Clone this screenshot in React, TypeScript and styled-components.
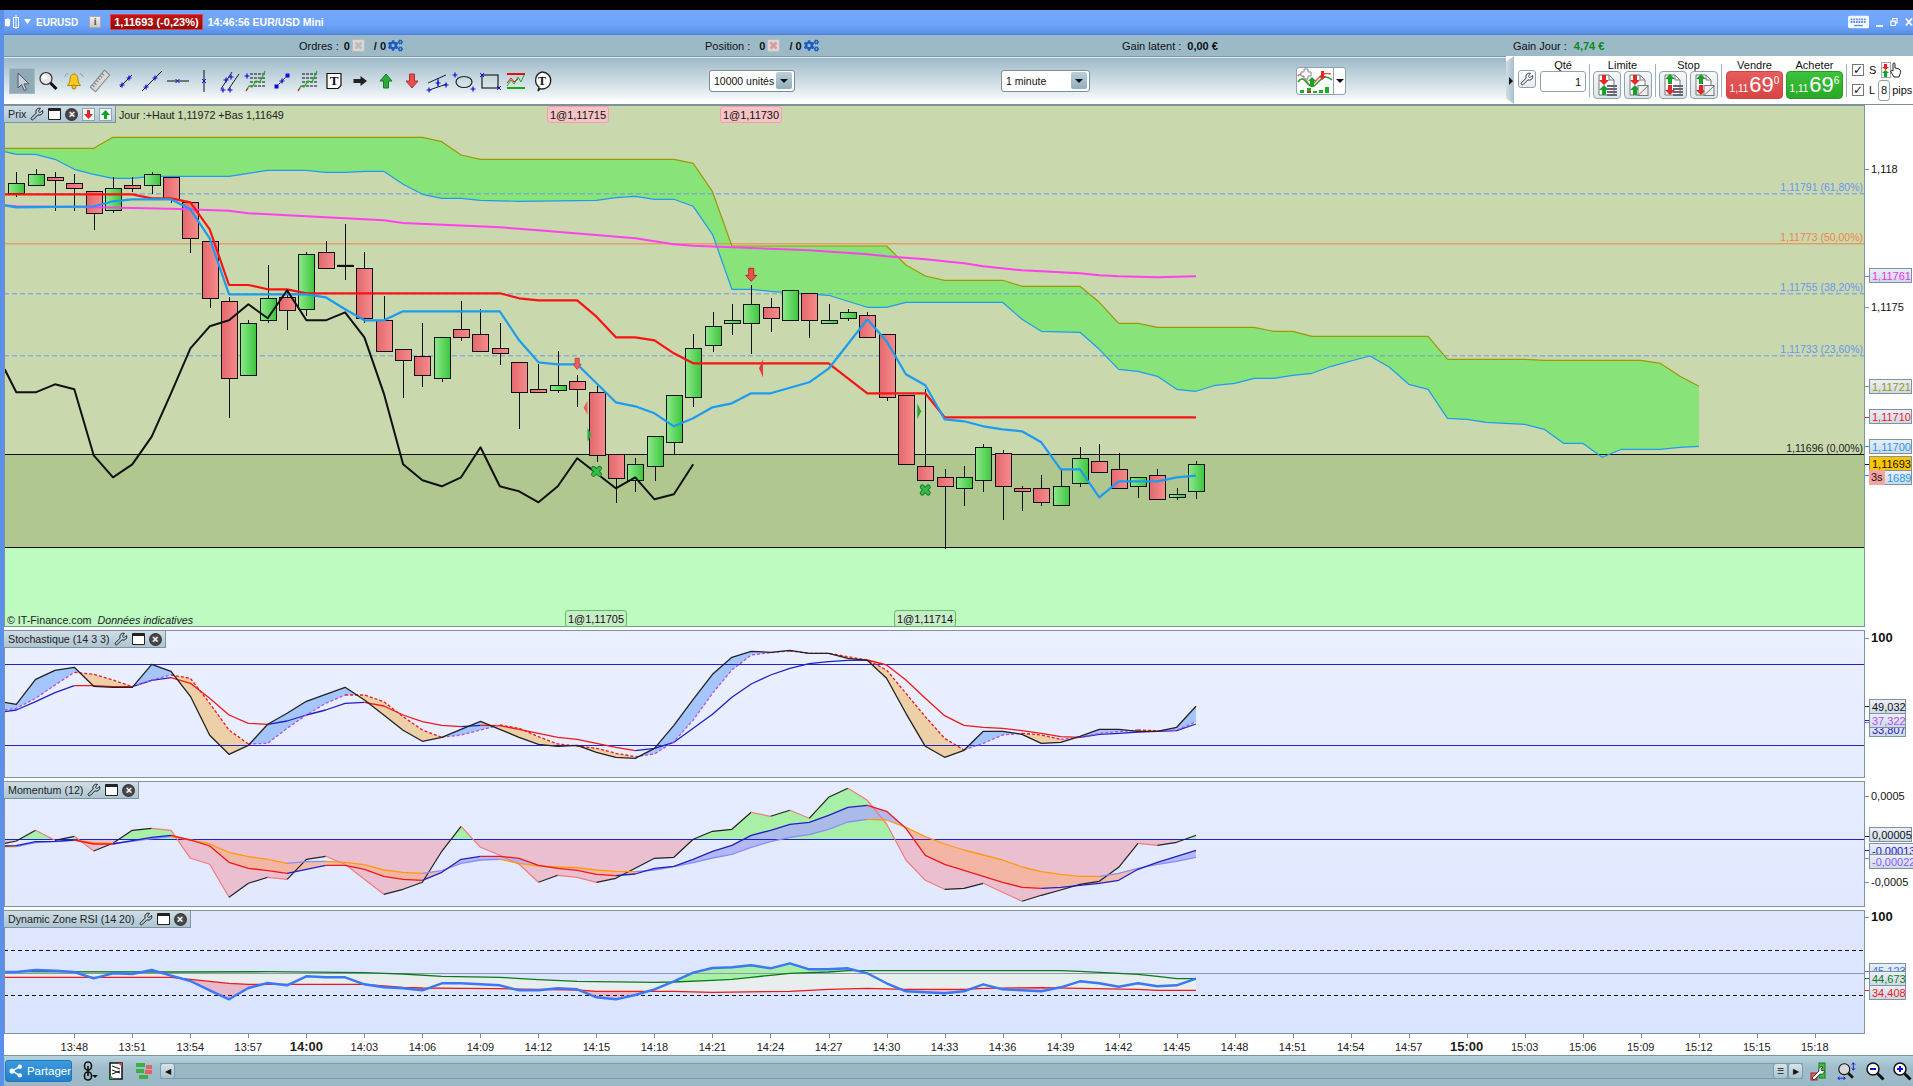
import React from "react";
import styled, { createGlobalStyle } from "styled-components";
import { Wrench } from "lucide-react";
import { FaCogs } from "react-icons/fa";

type Pt = [number, number];

// x of a minute index (0 = 13:45), in page pixels
const X = (i: number) => 16.3 + 19.34 * i;
// y values below are read from the zoomed crops: price crop starts at 130, indicators at 620
const PY = (z: number) => 130 + z / 3;
const IY = (z: number) => 620 + z / 3;

const seq = (first: number, rest: number[]): Pt[] => [[-0.6, first], ...rest.map((y, i) => [i, y] as Pt)];

const yAt = (s: Pt[], x: number) => {
  if (x <= s[0][0]) return s[0][1];
  for (let k = 1; k < s.length; k++) {
    if (x <= s[k][0]) {
      const [x0, y0] = s[k - 1];
      const [x1, y1] = s[k];
      return y0 + ((y1 - y0) * (x - x0)) / (x1 - x0);
    }
  }
  return s[s.length - 1][1];
};

const xsOf = (last: number) => [-0.6, ...Array.from({ length: last + 1 }, (_, i) => i)];
const pts = (s: Pt[], Y: (z: number) => number) => s.map(([i, z]) => `${X(i).toFixed(1)},${Y(z).toFixed(1)}`).join(" ");

// fills between two series, a different colour depending on which one is above
const ribbon = (a: Pt[], b: Pt[], last: number, up: string | null, down: string | null, Y: (z: number) => number) => {
  const out: { points: string; color: string }[] = [];
  const xs = xsOf(last);
  let top: string[] = [];
  let bot: string[] = [];
  let cur: string | null = null;
  const flush = () => {
    if (cur && top.length > 1) out.push({ points: [...top, ...bot.reverse()].join(" "), color: cur });
    top = [];
    bot = [];
  };
  const add = (x: number, ya: number, yb: number) => {
    top.push(`${X(x).toFixed(1)},${Y(ya).toFixed(1)}`);
    bot.push(`${X(x).toFixed(1)},${Y(yb).toFixed(1)}`);
  };
  for (let k = 0; k < xs.length - 1; k++) {
    const x0 = xs[k];
    const x1 = xs[k + 1];
    const a0 = yAt(a, x0);
    const a1 = yAt(a, x1);
    const b0 = yAt(b, x0);
    const b1 = yAt(b, x1);
    const d0 = a0 - b0;
    const d1 = a1 - b1;
    const c0 = d0 < 0 || (d0 === 0 && d1 < 0) ? up : down;
    if (c0 !== cur) {
      flush();
      cur = c0;
    }
    if (top.length === 0) add(x0, a0, b0);
    if (d0 * d1 < 0) {
      const t = d0 / (d0 - d1);
      const xc = x0 + (x1 - x0) * t;
      const yc = a0 + (a1 - a0) * t;
      add(xc, yc, yc);
      flush();
      cur = d1 < 0 ? up : down;
      add(xc, yc, yc);
    }
    add(x1, a1, b1);
  }
  flush();
  return out;
};

// a line coloured by its own direction: rising or falling
const runs = (s: Pt[], last: number, rising: string, falling: string, Y: (z: number) => number) => {
  const out: { points: string; color: string }[] = [];
  const xs = xsOf(last);
  let cur = "";
  let line: string[] = [];
  xs.forEach((x, k) => {
    if (k === xs.length - 1) return;
    const c = yAt(s, xs[k + 1]) < yAt(s, x) ? rising : falling;
    if (c !== cur) {
      if (line.length > 1) out.push({ points: line.join(" "), color: cur });
      cur = c;
      line = [`${X(x).toFixed(1)},${Y(yAt(s, x)).toFixed(1)}`];
    }
    line.push(`${X(xs[k + 1]).toFixed(1)},${Y(yAt(s, xs[k + 1])).toFixed(1)}`);
  });
  if (line.length > 1) out.push({ points: line.join(" "), color: cur });
  return out;
};

// [kind, bodyTop, bodyBottom, wickTop, wickBottom], minute index = position
const candles: [string, number, number, number, number][] = [
  ["g", 160, 190, 126, 200], ["g", 133, 166, 118, 166], ["r", 142, 151, 126, 242], ["r", 160, 176, 133, 242],
  ["r", 184, 250, 184, 300], ["g", 175, 241, 142, 250], ["r", 166, 175, 142, 185], ["g", 133, 166, 126, 193],
  ["r", 142, 207, 142, 218], ["r", 217, 325, 217, 368], ["r", 334, 505, 334, 533], ["r", 514, 745, 500, 863],
  ["g", 580, 736, 570, 736], ["g", 505, 571, 405, 580], ["r", 500, 538, 480, 600], ["g", 373, 538, 365, 558],
  ["r", 367, 415, 334, 415], ["r", 405, 407, 282, 450], ["r", 415, 565, 366, 580], ["r", 571, 664, 498, 664],
  ["r", 656, 688, 656, 803], ["r", 679, 736, 579, 770], ["g", 622, 745, 622, 755], ["r", 598, 622, 514, 632],
  ["r", 613, 664, 538, 664], ["r", 655, 670, 580, 705], ["r", 697, 787, 697, 896], ["r", 778, 787, 702, 787],
  ["g", 764, 778, 664, 788], ["r", 754, 778, 736, 830], ["r", 787, 975, 768, 997], ["r", 971, 1042, 971, 1118],
  ["g", 1003, 1050, 985, 1085], ["g", 919, 1009, 919, 1052], ["g", 796, 937, 796, 972], ["g", 655, 802, 612, 830],
  ["g", 589, 646, 546, 665], ["g", 571, 580, 522, 614], ["g", 523, 580, 466, 672], ["r", 532, 565, 504, 606],
  ["g", 481, 571, 481, 571], ["r", 490, 571, 490, 623], ["g", 571, 580, 522, 580], ["g", 547, 565, 538, 572],
  ["r", 556, 622, 546, 622], ["r", 613, 802, 613, 812], ["r", 796, 1003, 796, 1003], ["r", 1009, 1051, 778, 1051],
  ["r", 1042, 1069, 1018, 1258], ["g", 1042, 1075, 1008, 1128], ["g", 952, 1051, 942, 1085], ["r", 970, 1069, 960, 1170],
  ["r", 1075, 1084, 1068, 1143], ["r", 1075, 1117, 1035, 1127], ["g", 1069, 1126, 1018, 1126], ["g", 985, 1060, 952, 1070],
  ["r", 994, 1027, 942, 1027], ["r", 1018, 1075, 968, 1075], ["g", 1042, 1069, 1042, 1103], ["r", 1036, 1108, 1018, 1108],
  ["g", 1093, 1102, 1075, 1110], ["g", 1003, 1084, 994, 1108],
];

const cloudTop: Pt[] = [[-0.6, 55], [4, 55], [5, 22], [21, 22], [22, 35], [23, 75], [24, 88], [34, 88], [35, 100], [36, 185], [37, 348], [45, 348], [46, 405], [47, 438], [48, 451], [51, 451], [52, 469], [55, 469], [56, 517], [57, 580], [58, 580], [59, 592], [64, 592], [65, 604], [66, 604], [67, 619], [73, 619], [74, 688], [78, 688], [79, 691], [84, 691], [85, 700], [86, 738], [87, 769]];
const cloudBot: Pt[] = [[-0.6, 65], [0, 73], [1, 73], [2, 88], [3, 118], [4, 133], [5, 145], [6, 145], [7, 139], [11, 139], [12, 130], [13, 121], [15, 121], [16, 127], [17, 127], [18, 124], [19, 124], [20, 163], [21, 193], [22, 205], [23, 205], [24, 211], [26, 214], [30, 211], [31, 203], [32, 199], [33, 208], [34, 208], [35, 229], [36, 313], [37, 478], [38, 478], [39, 484], [42, 496], [43, 514], [44, 532], [45, 532], [46, 517], [51, 517], [52, 568], [53, 604], [55, 607], [56, 658], [57, 718], [58, 724], [59, 739], [60, 778], [61, 784], [62, 766], [63, 760], [64, 745], [65, 745], [66, 736], [67, 730], [68, 709], [69, 693], [70, 678], [71, 712], [72, 763], [73, 778], [74, 865], [75, 868], [76, 877], [78, 883], [79, 898], [80, 940], [81, 940], [82, 982], [83, 958], [85, 958], [86, 952], [87, 949]];
const kijun: Pt[] = [[-0.6, 193], [6, 193], [7, 205], [8, 205], [9, 217], [10, 298], [11, 465], [12, 465], [13, 478], [14, 478], [15, 490], [25, 490], [26, 505], [27, 511], [29, 511], [30, 560], [31, 622], [32, 622], [33, 631], [34, 670], [35, 700], [42, 700], [44, 790], [47, 790], [48, 862], [61, 862]];
const tenkan: Pt[] = [[-0.6, 226], [0, 232], [4, 229], [5, 214], [6, 208], [8, 208], [9, 238], [10, 325], [11, 493], [15, 493], [16, 502], [17, 538], [18, 571], [19, 571], [20, 544], [25, 544], [26, 631], [27, 697], [28, 703], [29, 703], [30, 760], [31, 817], [32, 829], [33, 850], [34, 889], [35, 865], [36, 832], [37, 820], [38, 790], [39, 790], [41, 757], [42, 716], [44, 568], [45, 634], [46, 733], [47, 766], [48, 868], [49, 874], [50, 889], [51, 898], [52, 904], [53, 937], [54, 1018], [55, 1018], [56, 1102], [57, 1054], [59, 1054], [60, 1042], [61, 1037]];
const sma: Pt[] = [[-0.6, 226], [0, 229], [4, 232], [8, 236], [11, 242], [12, 250], [16, 262], [19, 271], [20, 279], [25, 292], [27, 301], [32, 325], [34, 343], [35, 347], [37, 352], [41, 361], [44, 373], [45, 379], [47, 388], [49, 400], [50, 409], [52, 421], [55, 430], [56, 436], [57, 439], [59, 442], [61, 439]];
const lagging: Pt[] = seq(718, [787, 787, 763, 778, 976, 1042, 1003, 920, 790, 655, 589, 571, 523, 565, 481, 571, 571, 547, 622, 790, 1003, 1051, 1069, 1042, 952, 1069, 1084, 1117, 1069, 985, 1030, 1075, 1042, 1108, 1093, 1003]);

const stochK = seq(247, [253, 178, 151, 142, 199, 202, 202, 133, 154, 229, 346, 403, 376, 313, 280, 244, 223, 202, 240, 285, 331, 364, 352, 328, 304, 328, 352, 373, 379, 376, 397, 412, 415, 385, 316, 238, 163, 112, 94, 97, 91, 100, 100, 115, 121, 175, 280, 379, 412, 391, 334, 334, 343, 370, 367, 349, 328, 328, 334, 334, 322, 259]);
const stochD = seq(270, [265, 235, 195, 157, 163, 180, 200, 180, 165, 175, 250, 330, 372, 370, 325, 285, 250, 225, 225, 245, 290, 330, 352, 345, 330, 315, 325, 350, 372, 378, 385, 400, 410, 402, 365, 300, 220, 150, 105, 98, 93, 100, 100, 110, 120, 150, 220, 290, 355, 390, 370, 345, 340, 345, 358, 352, 340, 335, 330, 332, 330, 305]);
const stochS = seq(275, [270, 245, 218, 197, 197, 200, 200, 181, 173, 190, 235, 285, 310, 313, 303, 285, 270, 250, 247, 258, 285, 305, 316, 320, 316, 317, 328, 340, 352, 358, 370, 382, 392, 385, 367, 325, 283, 232, 192, 165, 145, 131, 125, 121, 120, 135, 180, 235, 287, 316, 322, 325, 332, 340, 350, 352, 343, 340, 336, 334, 332, 312]);

const zero: Pt[] = [[-0.6, 658], [61, 658]];
const momM = seq(670, [663, 631, 661, 649, 693, 670, 631, 625, 631, 715, 733, 832, 790, 772, 778, 718, 709, 733, 778, 823, 808, 787, 694, 619, 682, 706, 733, 787, 766, 772, 787, 775, 745, 715, 712, 658, 634, 628, 577, 589, 571, 595, 532, 505, 541, 612, 720, 781, 808, 805, 790, 817, 844, 826, 810, 793, 784, 742, 670, 676, 667, 646]);
const momA = seq(678, [677, 665, 664, 660, 672, 672, 662, 652, 646, 660, 678, 727, 745, 752, 760, 748, 736, 736, 748, 769, 778, 781, 757, 718, 709, 709, 715, 736, 745, 751, 763, 767, 762, 745, 739, 718, 694, 676, 646, 631, 613, 607, 586, 562, 556, 574, 625, 706, 733, 751, 769, 787, 802, 805, 802, 796, 790, 781, 748, 727, 709, 691]);
const momB = seq(680, [680, 668, 665, 661, 668, 670, 664, 656, 650, 660, 672, 697, 710, 718, 730, 725, 724, 727, 734, 750, 757, 760, 752, 730, 720, 718, 730, 738, 741, 743, 750, 754, 755, 750, 740, 728, 714, 703, 682, 665, 652, 644, 628, 606, 598, 600, 622, 650, 672, 690, 705, 720, 741, 755, 763, 769, 769, 760, 745, 733, 724, 712]);

const rsiR = seq(1056, [1056, 1050, 1052, 1056, 1075, 1060, 1062, 1050, 1067, 1083, 1111, 1138, 1104, 1089, 1096, 1069, 1072, 1072, 1093, 1102, 1105, 1111, 1090, 1090, 1093, 1096, 1111, 1111, 1105, 1108, 1132, 1138, 1125, 1108, 1084, 1058, 1044, 1042, 1036, 1045, 1030, 1048, 1048, 1045, 1060, 1090, 1114, 1117, 1120, 1114, 1093, 1108, 1111, 1114, 1102, 1084, 1090, 1100, 1090, 1099, 1096, 1076]);
const rsiU: Pt[] = [[-0.6, 1055], [8, 1056], [13, 1055], [18, 1058], [19, 1060], [20, 1062], [22, 1069], [25, 1072], [27, 1079], [29, 1084], [33, 1087], [34, 1086], [36, 1081], [37, 1078], [38, 1072], [39, 1066], [40, 1060], [41, 1058], [42, 1056], [43, 1052], [54, 1052], [55, 1054], [57, 1060], [58, 1063], [59, 1069], [60, 1076], [61, 1076]];
const rsiL: Pt[] = [[-0.6, 1072], [8, 1072], [9, 1078], [10, 1084], [11, 1090], [12, 1093], [18, 1093], [19, 1098], [20, 1102], [21, 1104], [23, 1105], [25, 1106], [27, 1108], [29, 1110], [30, 1114], [34, 1114], [36, 1117], [40, 1114], [42, 1108], [44, 1105], [46, 1108], [49, 1108], [50, 1105], [53, 1103], [55, 1105], [58, 1108], [59, 1111], [61, 1111]];

const times: { label: string; bold: boolean }[] = Array.from({ length: 31 }, (_, k) => {
  const m = 13 * 60 + 48 + k * 3;
  const mm = String(m % 60).padStart(2, "0");
  return { label: `${Math.floor(m / 60)}:${mm}`, bold: m % 60 === 0 };
});

const GlobalStyle = createGlobalStyle`
  html, body {
    margin: 0;
    padding: 0;
    background: #000;
    overflow: hidden;
  }
  * {
    box-sizing: border-box;
  }
  body {
    font-family: "Liberation Sans", Arial, sans-serif;
    font-size: 11px;
    color: #111;
  }
`;

const Root = styled.div`
  width: 1913px;
  height: 1086px;
  padding-top: 10px;
  background: #000;
  display: flex;
  flex-direction: column;
`;

const Frame = styled.div`
  flex: 1;
  min-height: 0;
  display: flex;
  flex-direction: column;
  background: #fff;
  border-left: 4px solid #5a90ea;
`;

const TitleBar = styled.div`
  height: 25px;
  display: flex;
  align-items: center;
  background: linear-gradient(#73a9fc, #6da3f8 60%, #5a8fe8);
  border-bottom: 1px solid #4d7fd6;
  color: #fff;
  font-weight: bold;
  font-size: 10.5px;
`;

const Symbol = styled.span`
  margin: 0 11px 0 3px;
  font-size: 10px;
`;

const InfoBox = styled.span`
  width: 12px;
  height: 12px;
  background: linear-gradient(#f0f0f0, #c8c8c8);
  border: 1px solid #aaa;
  color: #555;
  font: bold 10px/10px "Liberation Serif", serif;
  text-align: center;
`;

const PriceBox = styled.span`
  height: 16px;
  line-height: 15px;
  margin: 0 5px 0 9px;
  padding: 0 3px;
  font-size: 11px;
  background: linear-gradient(#c71414, #8f0b0b);
  border: 1px solid #e04040;
`;

const WindowControls = styled.div`
  margin-left: auto;
  display: flex;
  align-items: center;
  gap: 7px;
  height: 100%;
  width: 65px;
  overflow: hidden;
`;

const StatsBar = styled.div`
  height: 22px;
  flex: none;
  display: flex;
  align-items: center;
  padding-left: 295px;
  background: #9cb9c7;
  border-bottom: 1px solid #7d99a7;
  box-shadow: 0 1px 0 #e4eef2;
  position: relative;
`;

const StatGroup = styled.div<{ $width: number }>`
  width: ${(p) => p.$width}px;
  flex: none;
  display: flex;
  align-items: center;
  gap: 2px;
`;

const StatValue = styled.b<{ $color?: string; $gap?: number }>`
  color: ${(p) => p.$color || "#111"};
  margin-left: ${(p) => p.$gap || 0}px;
`;

const ToolBar = styled.div`
  height: 48px;
  flex: none;
  display: flex;
  align-items: center;
  padding-left: 5px;
  background: linear-gradient(#9cb9c7, #dfe9ee 70%, #fff 96%);
  border-bottom: 1px solid #7d8f98;
`;

const ToolButton = styled.div<{ $active?: boolean }>`
  width: 26px;
  height: 26px;
  flex: none;
  display: flex;
  align-items: center;
  justify-content: center;
  background: ${(p) => (p.$active ? "#8fa9b6" : "transparent")};
  box-shadow: ${(p) => (p.$active ? "inset 0 0 0 1px #a7bcc6" : "none")};
`;

const SelectBox = styled.div<{ $width: number; $left: number }>`
  width: ${(p) => p.$width}px;
  margin-left: ${(p) => p.$left}px;
  height: 22px;
  flex: none;
  display: flex;
  align-items: center;
  justify-content: space-between;
  padding: 0 2px 0 4px;
  background: #fff;
  border: 1px solid #7d8f98;
  border-radius: 3px;
  font-size: 11px;
  white-space: nowrap;
  span:first-child {
    font-size: 10.5px;
  }
`;

const SelectArrow = styled.span`
  width: 16px;
  height: 17px;
  flex: none;
  background: linear-gradient(#b9cfd9, #91aebd);
  border-radius: 2px;
  display: flex;
  align-items: center;
  justify-content: center;
  &::after {
    content: "";
    border-left: 4px solid transparent;
    border-right: 4px solid transparent;
    border-top: 4px solid #111;
  }
`;

const ChartTypeButton = styled.div`
  width: 50px;
  height: 28px;
  margin-left: 206px;
  flex: none;
  display: flex;
  background: #fff;
  border: 1px solid #8fa3ae;
  border-radius: 3px;
`;

const ChartTypeArrow = styled.div`
  flex: 1;
  border-left: 1px solid #8fa3ae;
  display: flex;
  align-items: center;
  justify-content: center;
  &::after {
    content: "";
    border-left: 4px solid transparent;
    border-right: 4px solid transparent;
    border-top: 4px solid #111;
  }
`;

const TradePanel = styled.div`
  margin-left: auto;
  width: 407px;
  height: 48px;
  margin-top: -1px;
  align-self: flex-start;
  flex: none;
  background: #fff;
  display: flex;
  align-items: flex-start;
  position: relative;
  padding-left: 12px;
  &::before {
    content: "";
    position: absolute;
    left: 0;
    top: 0;
    width: 8px;
    height: 48px;
    background: linear-gradient(90deg, #cfdde5, #a9c0cc);
    clip-path: polygon(100% 0, 0 12%, 0 88%, 100% 100%);
  }
  &::after {
    content: "";
    position: absolute;
    left: 3px;
    top: 21px;
    border-top: 4px solid transparent;
    border-bottom: 4px solid transparent;
    border-left: 4px solid #111;
  }
`;

const SmallButton = styled.div`
  width: 18px;
  height: 18px;
  margin-top: 14px;
  flex: none;
  border: 1px solid #8fa3ae;
  border-radius: 3px;
  background: linear-gradient(#fff, #e4ebef);
  display: flex;
  align-items: center;
  justify-content: center;
`;

const TradeGroup = styled.div<{ $left: number; $width: number }>`
  margin-left: ${(p) => p.$left}px;
  width: ${(p) => p.$width}px;
  flex: none;
  display: flex;
  flex-direction: column;
  align-items: center;
`;

const TradeLabel = styled.div`
  height: 15px;
  line-height: 18px;
  font-size: 11px;
  color: #111;
`;

const TradeRow = styled.div`
  display: flex;
  gap: 3px;
`;

const QtyField = styled.div`
  width: 46px;
  height: 21px;
  border: 1px solid #8fa3ae;
  border-radius: 3px;
  text-align: right;
  padding: 4px 4px 0 0;
  font-size: 11px;
`;

const OrderButton = styled.div`
  width: 28px;
  height: 28px;
  border: 1px solid #8fa3ae;
  border-radius: 4px;
  background: linear-gradient(#f4f7f8, #dde6ea);
  display: flex;
  align-items: center;
  justify-content: center;
`;

const Sep = styled.div`
  width: 1px;
  height: 33px;
  margin: 8px 0 0 3px;
  background: #9fb2bc;
  flex: none;
`;

const PriceButton = styled.div<{ $color: "red" | "green" }>`
  width: 57px;
  height: 28px;
  border-radius: 4px;
  color: #fff;
  display: flex;
  align-items: center;
  justify-content: center;
  background: ${(p) => (p.$color === "red" ? "linear-gradient(#e75c5c, #d84444)" : "linear-gradient(#3cc23c, #28a828)")};
  border: 1px solid ${(p) => (p.$color === "red" ? "#c44" : "#2a9a2a")};
`;

const PriceSmall = styled.span`
  font-size: 10px;
  align-self: flex-end;
  margin-bottom: 4px;
`;

const PriceBig = styled.span`
  font-size: 22px;
  line-height: 26px;
  margin-left: 1px;
`;

const PriceSup = styled.span`
  font-size: 10px;
  align-self: flex-start;
  margin-top: 3px;
`;

const ChecksColumn = styled.div`
  margin-left: 5px;
  padding-top: 6px;
  display: flex;
  flex-direction: column;
  gap: 4px;
`;

const CheckRow = styled.div`
  display: flex;
  align-items: center;
  height: 16px;
  gap: 5px;
`;

const Check = styled.span`
  width: 12px;
  height: 12px;
  border: 1px solid #777;
  background: #fff;
  font-size: 12px;
  line-height: 10px;
  font-weight: bold;
  font-family: "DejaVu Sans", sans-serif;
  text-align: center;
  flex: none;
`;

const PipField = styled.span`
  width: 12px;
  height: 21px;
  border: 1px solid #8fa3ae;
  border-radius: 3px;
  line-height: 19px;
  text-align: center;
  margin: 0 -3px -1px -2px;
  flex: none;
`;

const PaneRow = styled.div<{ $height: number; $gap?: number }>`
  height: ${(p) => p.$height}px;
  margin-bottom: ${(p) => p.$gap || 0}px;
  flex: none;
  display: flex;
`;

const Pane = styled.div<{ $bg: string }>`
  width: 1861px;
  height: 100%;
  flex: none;
  position: relative;
  overflow: hidden;
  background: ${(p) => p.$bg};
  outline: 1px solid #7d93a0;
  outline-offset: -1px;
  & > svg {
    display: block;
  }
`;

const Legend = styled.div`
  position: absolute;
  left: 0;
  top: 1px;
  height: 17px;
  padding: 0 3px 0 4px;
  display: flex;
  align-items: center;
  gap: 4px;
  background: linear-gradient(#cfdde5, #aec5d1);
  border-right: 1px solid #7d93a0;
  border-bottom: 1px solid #7d93a0;
  font-size: 10.7px;
  color: #222;
`;

const LegendText = styled.span`
  position: absolute;
  left: 115px;
  top: 4px;
  font-size: 10.7px;
  color: #222;
`;

const WinBox = styled.span`
  width: 13px;
  height: 12px;
  background: #fff;
  border: 1px solid #222;
  border-top-width: 3px;
  border-radius: 1px;
`;

const CloseDot = styled.span`
  width: 13px;
  height: 13px;
  border-radius: 50%;
  background: radial-gradient(#666, #222);
  color: #fff;
  font-size: 11px;
  font-weight: bold;
  line-height: 12px;
  text-align: center;
`;

const Footnote = styled.span`
  position: absolute;
  left: 3px;
  bottom: 1px;
  font-size: 10.7px;
  color: #222;
  em {
    margin-left: 3px;
  }
`;

const FillTag = styled.div<{ $left: number; $tone: "sell" | "buy" }>`
  position: absolute;
  left: ${(p) => p.$left}px;
  ${(p) => (p.$tone === "sell" ? "top: 1px;" : "bottom: 0;")}
  width: 62px;
  height: 17px;
  line-height: 16px;
  text-align: center;
  font-size: 11px;
  color: #111;
  border-radius: 3px;
  background: ${(p) => (p.$tone === "sell" ? "#f6c4c4" : "#c8ecc8")};
  border: 1px solid ${(p) => (p.$tone === "sell" ? "#f0a0a8" : "#54c854")};
`;

const Axis = styled.div`
  flex: 1;
  position: relative;
  overflow: hidden;
  background: #fff;
`;

const AxisTick = styled.i<{ $top: number; $color?: string }>`
  position: absolute;
  left: 0;
  top: ${(p) => p.$top}px;
  width: 4px;
  height: 1px;
  background: ${(p) => p.$color || "#7d93a0"};
`;

const AxisLabel = styled.span<{ $top: number; $bold?: boolean }>`
  position: absolute;
  left: 6px;
  top: ${(p) => p.$top - 7}px;
  font-size: ${(p) => (p.$bold ? 13 : 11)}px;
  font-weight: ${(p) => (p.$bold ? "bold" : "normal")};
  line-height: 14px;
  color: #111;
`;

const AxisTag = styled.span<{ $top: number; $width: number; $color: string; $bg?: string }>`
  position: absolute;
  left: 4px;
  top: ${(p) => p.$top}px;
  width: ${(p) => p.$width}px;
  height: 15px;
  padding-left: 2px;
  font-size: 11px;
  line-height: 14px;
  white-space: nowrap;
  color: ${(p) => p.$color};
  background: ${(p) => p.$bg || "linear-gradient(#eaeff9, #cfd9e6)"};
  border: 1px solid #7d93a0;
`;

const CountdownPart = styled.span`
  position: absolute;
  left: 4px;
  top: 365px;
  width: 16px;
  height: 15px;
  padding-left: 2px;
  font-size: 11px;
  line-height: 14px;
  background: #f4a4a0;
  color: #111;
`;

const CountValue = styled.span`
  margin-left: 15px;
`;

const TimeAxis = styled.div`
  height: 22px;
  flex: none;
  display: flex;
  padding-left: 41.3px;
  background: #fff;
  border-bottom: 1px solid #7d93a0;
`;

const TimeTick = styled.div<{ $bold: boolean }>`
  width: 58.03px;
  flex: none;
  text-align: center;
  position: relative;
  padding-top: 6px;
  font-size: ${(p) => (p.$bold ? 13 : 11)}px;
  line-height: 14px;
  font-weight: ${(p) => (p.$bold ? "bold" : "normal")};
  color: #222;
  &::before {
    content: "";
    position: absolute;
    left: 50%;
    top: 0;
    width: 1px;
    height: 4px;
    background: #7d93a0;
  }
`;

const BottomBar = styled.div`
  flex: 1;
  display: flex;
  align-items: center;
  padding-left: 1px;
  background: linear-gradient(#b4d1dd, #9fbdcb 40%, #99b7c5);
`;

const ShareButton = styled.div`
  width: 67px;
  height: 22px;
  flex: none;
  display: flex;
  align-items: center;
  gap: 4px;
  padding-left: 3px;
  border-radius: 3px;
  background: linear-gradient(#3c9ae0, #2480c8);
  border: 1px solid #1f78c0;
  color: #fff;
  font-size: 11.5px;
`;

const BarIcon = styled.div<{ $width: number; $left: number }>`
  width: ${(p) => p.$width}px;
  margin-left: ${(p) => p.$left}px;
  height: 22px;
  flex: none;
  display: flex;
  align-items: center;
  justify-content: center;
`;

const ScrollTrack = styled.div`
  flex: none;
  width: 1643px;
  height: 16px;
  margin-left: 8px;
  display: flex;
  justify-content: space-between;
  align-items: center;
  border-top: 1px solid #7f9aa8;
  border-bottom: 1px solid #7f9aa8;
  background: #99b7c5;
`;

const ScrollEnd = styled.div`
  display: flex;
`;

const ScrollButton = styled.div`
  width: 15px;
  height: 16px;
  border: 1px solid #7f9aa8;
  border-radius: 3px;
  background: linear-gradient(#d6e4ea, #aac3cf);
  display: flex;
  align-items: center;
  justify-content: center;
  font-size: 8px;
  color: #111;
`;

/* ---- drawings ---- */

const CrossMark: React.FC<{ x: number; y: number }> = ({ x, y }) => (
  <path d={`M${x - 2.5} ${y}h5M${x} ${y - 2.5}v5`} stroke="#0a0ae6" strokeWidth="1.2" fill="none" />
);

const FibLines: React.FC = () => (
  <>
    <path d="M6 5h16M6 9h16M6 13h16M6 17h16" stroke="#111" strokeWidth="1" strokeDasharray="3 1" fill="none" />
    <path d="M2 22l3-5 3 1 4-6 4 1 5-11" stroke="#22aa22" strokeWidth="1.2" fill="none" />
    <path d="M2 22l2-3" stroke="#e02020" strokeWidth="1.2" fill="none" />
  </>
);

const toolIcons: React.ReactNode[] = [
  <path key="a" d="M8 4v15l3.5-3.5 2.7 6 2.3-1-2.6-5.6h5z" fill="#c8d2d8" stroke="#4c5a62" strokeWidth="1" />,
  <g key="b">
    <circle cx="10" cy="9.5" r="6" fill="#e6e6e6" stroke="#333" strokeWidth="1.2" />
    <circle cx="8.5" cy="8" r="2.5" fill="#fff" />
    <path d="M14.5 14l6 6" stroke="#111" strokeWidth="3" />
  </g>,
  <g key="c">
    <path d="M12 5c-3 0-4 3-4 6 0 3-2 4-2.5 5.5h13c-.5-1.5-2.500-2.500-2.500-5.500 0-3-1-6-4-6z" fill="#ffc81e" stroke="#a88410" />
    <circle cx="12" cy="18" r="2" fill="#ffc81e" stroke="#a88410" />
    <path d="M4.500 5l-2 3M19.500 5l2 3M6 4L4.500 6M18 4l1.500 2" stroke="#999" fill="none" />
  </g>,
  <g key="d" transform="rotate(-50 12 12)">
    <rect x="1" y="8.500" width="22" height="7" fill="#d8d8d8" stroke="#888" />
    <path d="M4 8.500v3M7 8.500v3M10 8.500v3M13 8.500v3M16 8.500v3M19 8.500v3" stroke="#777" />
  </g>,
  <g key="e">
    <path d="M6 18L18 6" stroke="#111" />
    <CrossMark x={8} y={16} />
    <CrossMark x={15} y={9} />
  </g>,
  <g key="f">
    <path d="M2 22L22 2" stroke="#111" />
    <CrossMark x={6} y={18} />
    <CrossMark x={15} y={9} />
  </g>,
  <g key="g">
    <path d="M1 12h22" stroke="#111" />
    <path d="M9.500 10l4 4M13.500 10l-4 4" stroke="#0a0ae6" />
  </g>,
  <g key="h">
    <path d="M12 1v22" stroke="#111" />
    <path d="M10 10l4 4M14 10l-4 4" stroke="#0a0ae6" />
  </g>,
  <g key="i">
    <path d="M3 20L14 3M10 21L21 5" stroke="#222" fill="none" />
    <CrossMark x={5} y={21} />
    <CrossMark x={12} y={21} />
    <CrossMark x={8} y={11} />
    <CrossMark x={13} y={8} />
  </g>,
  <g key="j">
    <FibLines />
    <CrossMark x={3} y={7} />
  </g>,
  <g key="k">
    <path d="M7 17L17 7" stroke="#111" strokeDasharray="2 1" />
    <rect x="4.500" y="15.500" width="4" height="4" fill="#0a0ae6" />
    <rect x="15.500" y="4.500" width="4" height="4" fill="#0a0ae6" />
    <CrossMark x={12} y={12} />
  </g>,
  <FibLines key="l" />,
  <g key="m">
    <path d="M5 4.500h14v12l-3 3H5z" fill="#fff" stroke="#111" strokeWidth="1.200" />
    <text x="12" y="16" fontFamily="Liberation Serif" fontWeight="bold" fontSize="13" textAnchor="middle" fill="#111">T</text>
  </g>,
  <path key="n" d="M5.500 10h7V7l6.500 5-6.500 5v-3h-7z" fill="#222" />,
  <path key="o" d="M12 5l6 7h-3.500v7h-5v-7H6z" fill="#2eaa3a" stroke="#1a7a28" />,
  <path key="p" d="M12 19l-6-7h3.500V5h5v7H18z" fill="#e85050" stroke="#b03030" />,
  <g key="q">
    <path d="M2 14L20 6M3 21L21 15" stroke="#222" fill="none" />
    <path d="M12 9v9" stroke="#0a0ae6" />
    <CrossMark x={3} y={21} />
    <CrossMark x={20} y={16} />
    <CrossMark x={12} y={14} />
  </g>,
  <g key="r">
    <ellipse cx="12" cy="13" rx="8" ry="5.500" fill="none" stroke="#222" strokeWidth="1.200" />
    <CrossMark x={3} y={6} />
    <CrossMark x={21} y={20} />
  </g>,
  <g key="s">
    <rect x="4" y="6" width="16" height="13" fill="none" stroke="#222" strokeWidth="1.200" />
    <path d="M2 4l4 4M6 4L2 8M19 17l4 4M23 17l-4 4" stroke="#0a0ae6" />
  </g>,
  <g key="t">
    <path d="M3 5h18" stroke="#e01010" strokeWidth="2" />
    <path d="M3 19h18" stroke="#18a818" strokeWidth="2" />
    <path d="M3 17l4-6 3 4 4-7 3 5 3-7" stroke="#22aa22" fill="none" />
    <path d="M3 14l4-5 3 4 4-3" stroke="#e01010" fill="none" />
  </g>,
  <g key="u">
    <path d="M12 3a8.500 8.500 0 1 1-2 16.700L8 22l1-4a8.500 8.500 0 0 1 3-15z" fill="#fff" stroke="#222" strokeWidth="1.300" />
    <text x="12" y="16" fontFamily="Liberation Serif" fontWeight="bold" fontSize="12" textAnchor="middle" fill="#111">T</text>
  </g>,
];

const Magnifier: React.FC<{ mark?: "minus" | "plus"; size?: number }> = ({ mark, size = 20 }) => (
  <svg width={size} height={size} viewBox="0 0 20 20">
    <circle cx="8" cy="8" r="6" fill={mark ? "#fff" : "#cfcfcf"} stroke="#111" strokeWidth="1.500" />
    {mark && <path d="M5 8h6" stroke="#1010d0" strokeWidth="2" />}
    {mark === "plus" && <path d="M8 5v6" stroke="#1010d0" strokeWidth="2" />}
    <path d="M12.500 12.500l6 6" stroke="#111" strokeWidth="3" />
  </svg>
);

const OrderIcon: React.FC<{ first: "up" | "down"; kind: "list" | "slash" }> = ({ first, kind }) => {
  const topColor = first === "down" ? "#e02828" : "#14a02a";
  const botColor = first === "down" ? "#14a02a" : "#e02828";
  const topPath = first === "down" ? "M7 2h4v5h3l-5 5-5-5h3z" : "M9 1l5 5h-3v5H7V6H4z";
  const botPath = first === "down" ? "M9 12l5 5h-3v5H7v-5H4z" : "M7 12h4v5h3l-5 5-5-5h3z";
  return (
    <svg width="24" height="24" viewBox="0 0 24 24">
      <path d="M4 2h10l5 5v15H4z" fill="#fff" stroke="#777" />
      <path d="M14 2v5h5" fill="none" stroke="#777" />
      <path d={topPath} fill={topColor} />
      <path d={botPath} fill={botColor} />
      {kind === "list" ? (
        <path d="M12 13h10M12 16h10M12 19h10M12 22h10" stroke="#667" strokeWidth="2" />
      ) : (
        <g>
          <rect x="12" y="12.500" width="10" height="10" fill="#eee" stroke="#777" />
          <path d="M12.500 22L22 13" stroke="#777" />
        </g>
      )}
    </svg>
  );
};

const Cog: React.FC = () => <FaCogs size={15} color="#1a5cc4" />;

const CancelMark: React.FC<{ tint: string }> = ({ tint }) => (
  <svg width="13" height="13" viewBox="0 0 13 13">
    <rect x="0.500" y="0.500" width="12" height="12" fill="#d8d8d8" stroke="#bbb" />
    <path d="M3.500 3.500l6 6M9.500 3.500l-6 6" stroke={tint} strokeWidth="2.500" />
  </svg>
);

const LegendDoc: React.FC<{ dir: "up" | "down" }> = ({ dir }) => (
  <svg width="13" height="13" viewBox="0 0 13 13">
    <rect x="0.500" y="0.500" width="12" height="12" fill="#f2f5f8" stroke="#8aa" />
    <path
      d={dir === "down" ? "M5 2h3v4h3l-4.500 5L2 6h3z" : "M6.500 2L11 7H8v4H5V7H2z"}
      fill={dir === "down" ? "#e02828" : "#14a02a"}
    />
  </svg>
);

const Chart = {
  line(points: string, color: string, width: number, key?: string, dash?: string) {
    return (
      <polyline key={key} points={points} fill="none" stroke={color} strokeWidth={width} strokeDasharray={dash} strokeLinejoin="round" />
    );
  },
};

const PricePlot: React.FC = () => {
  const cloudPts = `${pts(cloudTop, PY)} ${pts([...cloudBot].reverse(), PY)}`;
  const fibs: [number, string, string, string][] = [
    [190, "#6b96ee", "1,11791 (61,80%)", "5 3"],
    [340, "#f0844a", "1,11773 (50,00%)", ""],
    [490, "#6b96ee", "1,11755 (38,20%)", "5 3"],
    [676, "#6b96ee", "1,11733 (23,60%)", "5 3"],
  ];
  return (
    <svg width="1861" height="522" viewBox="4 105 1861 522">
      <defs>
        <linearGradient id="redBody" x1="0" x2="1" y1="0" y2="0">
          <stop offset="0" stopColor="#e4686c" />
          <stop offset="1" stopColor="#f58c8c" />
        </linearGradient>
        <linearGradient id="greenBody" x1="0" x2="1" y1="0" y2="0">
          <stop offset="0" stopColor="#8ee88e" />
          <stop offset="1" stopColor="#3cc63c" />
        </linearGradient>
      </defs>
      <rect x="4" y="105" width="1861" height="349" fill="#c9d8ad" />
      <rect x="4" y="454" width="1861" height="93" fill="#b0c78f" />
      <rect x="4" y="547" width="1861" height="80" fill="#bdfbc1" />
      <polygon points={cloudPts} fill="#88e478" />
      {fibs.map(([z, color, label, dash]) => (
        <g key={label}>
          <line x1="4" x2="1865" y1={PY(z) + 0.5} y2={PY(z) + 0.5} stroke={color} strokeDasharray={dash} />
          <text x="1863" y={PY(z) - 2} textAnchor="end" fontSize="10.500" fontFamily="Liberation Sans" fill={color}>{label}</text>
        </g>
      ))}
      <line x1="4" x2="1865" y1="454.500" y2="454.500" stroke="#111" />
      <line x1="4" x2="1865" y1="547.500" y2="547.500" stroke="#111" />
      <text x="1863" y="452" textAnchor="end" fontSize="10.500" fontFamily="Liberation Sans" fill="#222">1,11696 (0,00%)</text>
      {Chart.line(pts(cloudTop, PY), "#a09800", 1.2)}
      {Chart.line(pts(cloudBot, PY), "#1c9cf0", 1.2)}
      <g shapeRendering="crispEdges">
        {candles.map(([k, top, bot, hi, lo], i) => {
          const cx = Math.round(X(i)) + 0.5;
          return (
            <g key={i}>
              <line x1={cx} x2={cx} y1={PY(hi)} y2={PY(lo)} stroke="#111" />
              <rect
                x={cx - 8}
                y={Math.round(PY(top)) + 0.5}
                width="16"
                height={Math.max(1, Math.round(PY(bot) - PY(top)))}
                fill={`url(#${k === "r" ? "redBody" : "greenBody"})`}
                stroke="#111"
              />
            </g>
          );
        })}
      </g>
      <line x1={X(17) - 8} x2={X(17) + 8} y1={PY(406)} y2={PY(406)} stroke="#111" />
      {Chart.line(pts(sma, PY), "#ff40ee", 2)}
      {Chart.line(pts(kijun, PY), "#f81414", 2.2)}
      {Chart.line(pts(tenkan, PY), "#1c9cf0", 2.2)}
      {Chart.line(pts(lagging, PY), "#111", 2)}
      <path d={`M${X(38) - 2.500} ${PY(415)}h5v7h3l-5.500 6-5.500-6h3z`} fill="#ee5050" stroke="#c02020" />
      <path d={`M${X(29) - 2} ${PY(685)}h4v6h2l-4 5-4-5h2z`} fill="#ee6060" stroke="#d04040" />
      <path d={`M${X(30) - 9} ${PY(812)}l-4 7 4 7z`} fill="#ee6060" />
      <path d={`M${X(30) - 9} ${PY(893)}l4 7-4 7z`} fill="#28a838" />
      <path d={`M${X(47) - 8} ${PY(820)}l4 8-4 8z`} fill="#28a838" />
      <path d={`M763 ${PY(688)}l-4 9 4 9z`} fill="#e83838" />
      {[
        [X(30), PY(1024)],
        [X(47), PY(1080)],
      ].map(([x, y]) => (
        <g key={x} strokeLinecap="round" fill="none">
          <path d={`M${x - 3} ${y - 3}l6 6M${x + 3} ${y - 3}l-6 6`} stroke="#1c8028" strokeWidth="5" />
          <path d={`M${x - 3} ${y - 3}l6 6M${x + 3} ${y - 3}l-6 6`} stroke="#34bc48" strokeWidth="3" />
        </g>
      ))}
    </svg>
  );
};

const StochPlot: React.FC = () => {
  const fills = ribbon(stochK, stochD, 61, "#a4c6fc", "#eed0a8", IY);
  return (
    <svg width="1861" height="148" viewBox="4 630 1861 148">
      {fills.map((f) => (
        <polygon key={f.points} points={f.points} fill={f.color} />
      ))}
      <line x1="4" x2="1865" y1="664.500" y2="664.500" stroke="#2222cc" />
      <line x1="4" x2="1865" y1="745.500" y2="745.500" stroke="#2222cc" />
      {runs(stochS, 61, "#2020c0", "#f01818", IY).map((r) => Chart.line(r.points, r.color, 1.3, r.points))}
      {runs(stochD, 61, "#b050f0", "#f01818", IY).map((r) => Chart.line(r.points, r.color, 1.3, r.points, "3 2"))}
      {Chart.line(pts(stochK, IY), "#222", 1.3)}
    </svg>
  );
};

const MomentumPlot: React.FC = () => {
  const areaFills = ribbon(momM, zero, 61, "#a8f0a8", "#eabfcf", IY);
  const signalFills = ribbon(momA, momB, 61, "#aab0f4", "#f4b49c", IY);
  return (
    <svg width="1861" height="126" viewBox="4 781 1861 126">
      {areaFills.map((f) => (
        <polygon key={f.points} points={f.points} fill={f.color} />
      ))}
      {signalFills.map((f) => (
        <polygon key={f.points} points={f.points} fill={f.color} fillOpacity="0.85" />
      ))}
      <line x1="4" x2="1865" y1="839.500" y2="839.500" stroke="#2222cc" />
      {runs(momM, 61, "#222", "#f07c7c", IY).map((r) => Chart.line(r.points, r.color, 1.2, r.points))}
      {runs(momB, 61, "#8a8cf8", "#ff9a10", IY).map((r) => Chart.line(r.points, r.color, 1.3, r.points))}
      {runs(momA, 61, "#2020c0", "#f01818", IY).map((r) => Chart.line(r.points, r.color, 1.3, r.points))}
    </svg>
  );
};

const RsiPlot: React.FC = () => {
  const band = ribbon(rsiU, rsiL, 61, "#e8edee", "#e8edee", IY);
  const over = ribbon(rsiR, rsiU, 61, "#a8f0a8", null, IY);
  const under = ribbon(rsiR, rsiL, 61, null, "#e8b8cc", IY);
  return (
    <svg width="1861" height="124" viewBox="4 910 1861 124">
      {[...band, ...over, ...under].map((f) => (
        <polygon key={f.points} points={f.points} fill={f.color} />
      ))}
      <line x1="4" x2="1865" y1="950.500" y2="950.500" stroke="#111" strokeDasharray="4 3" />
      <line x1="4" x2="1865" y1="973.500" y2="973.500" stroke="#8c98a4" />
      <line x1="4" x2="1865" y1="995.500" y2="995.500" stroke="#111" strokeDasharray="4 3" />
      {Chart.line(pts(rsiU, IY), "#0a7a1a", 1.3)}
      {Chart.line(pts(rsiL, IY), "#f01818", 1.3)}
      {Chart.line(pts(rsiR, IY), "#3a78f4", 2.4)}
    </svg>
  );
};

const IndicatorLegend: React.FC<{ text: string }> = ({ text }) => (
  <Legend>
    <span>{text}</span>
    <Wrench size={14} color="#111" strokeWidth={1.6} />
    <WinBox />
    <CloseDot>×</CloseDot>
  </Legend>
);

const App: React.FC = () => {
  return (
    <Root>
      <GlobalStyle />
      <Frame>
        <TitleBar>
          <svg width="18" height="20" viewBox="0 0 18 20">
            <path d="M4 6v9M12 3v14" stroke="#fff" />
            <rect x="1" y="7" width="5" height="7" fill="#fff" />
            <rect x="9.500" y="5.500" width="5" height="10" fill="none" stroke="#fff" />
          </svg>
          <svg width="11" height="8" viewBox="0 0 11 8">
            <path d="M2 1h7L5.500 6z" fill="#fff" />
          </svg>
          <Symbol>EURUSD</Symbol>
          <InfoBox>i</InfoBox>
          <PriceBox>1,11693 (-0,23%)</PriceBox>
          <span>14:46:56 EUR/USD Mini</span>
          <WindowControls>
            <svg width="24" height="14" viewBox="0 0 24 14">
              <rect width="24" height="14" rx="2" fill="#f4f8ff" />
              <path d="M3 4h18M3 7h18" stroke="#5a8fe8" strokeDasharray="2 1" strokeWidth="2" />
              <path d="M7 11h10" stroke="#5a8fe8" strokeWidth="1.500" />
            </svg>
            <svg width="8" height="12" viewBox="0 0 8 12">
              <path d="M0 10.500h8" stroke="#fff" strokeWidth="2" />
            </svg>
            <svg width="9" height="10" viewBox="0 0 9 10">
              <path d="M3 3V1h5v5H6M1 4h5v5H1z" fill="none" stroke="#fff" strokeWidth="1.300" />
            </svg>
            <svg width="9" height="10" viewBox="0 0 9 10">
              <path d="M1 1l7 8M8 1L1 9" stroke="#fff" strokeWidth="2" />
            </svg>
          </WindowControls>
        </TitleBar>
        <StatsBar>
          <StatGroup $width={406}>
            <span>Ordres :</span>
            <StatValue $gap={3}>0</StatValue>
            <CancelMark tint="#bbb" />
            <StatValue $gap={7}>/ 0</StatValue>
            <Cog />
          </StatGroup>
          <StatGroup $width={417}>
            <span>Position :</span>
            <StatValue $gap={7}>0</StatValue>
            <CancelMark tint="#d89a9a" />
            <StatValue $gap={7}>/ 0</StatValue>
            <Cog />
          </StatGroup>
          <StatGroup $width={391}>
            <span>Gain latent :</span>
            <StatValue $gap={4}>0,00 €</StatValue>
          </StatGroup>
          <StatGroup $width={200}>
            <span>Gain Jour :</span>
            <StatValue $gap={5} $color="#0c8a18">4,74 €</StatValue>
          </StatGroup>
        </StatsBar>
        <ToolBar>
          {toolIcons.map((icon, i) => (
            <ToolButton key={i} $active={i === 0}>
              <svg width="24" height="24" viewBox="0 0 24 24">{icon}</svg>
            </ToolButton>
          ))}
          <SelectBox $width={86} $left={154}>
            <span>10000 unités</span>
            <SelectArrow />
          </SelectBox>
          <SelectBox $width={89} $left={206}>
            <span>1 minute</span>
            <SelectArrow />
          </SelectBox>
          <ChartTypeButton>
            <svg width="36" height="26" viewBox="0 0 36 26">
              <path d="M1 8c6-8 9 14 15 8s8-12 18-10" fill="none" stroke="#e06060" strokeWidth="1.500" />
              <path d="M1 14c6-10 10 8 16 4s9-14 18-6" fill="none" stroke="#2aa02a" strokeWidth="1.500" />
              <path d="M4 4h3V1h4v3h3v4h-3v3H7V8H4z" fill="#fff" stroke="#888" />
              <path d="M15 9l4 4h-2v5h-4v-5h-2z" fill="#18a028" />
              <path d="M24 3h3v5h2l-3.500 4L22 8h2z" fill="#e02828" />
              <path d="M3 25v-3h4v3zM10 25v-5h4v5zM16 25v-2h4v2zM22 25v-3h4v3zM28 25v-6h4v6z" fill="#18b028" />
              <path d="M10 25v-2h4v2z" fill="#e02828" />
            </svg>
            <ChartTypeArrow />
          </ChartTypeButton>
          <TradePanel>
            <SmallButton>
              <Wrench size={14} color="#222" strokeWidth={1.5} />
            </SmallButton>
            <TradeGroup $left={4} $width={46}>
              <TradeLabel>Qté</TradeLabel>
              <QtyField>1</QtyField>
            </TradeGroup>
            <Sep />
            <TradeGroup $left={3} $width={59}>
              <TradeLabel>Limite</TradeLabel>
              <TradeRow>
                <OrderButton><OrderIcon first="down" kind="list" /></OrderButton>
                <OrderButton><OrderIcon first="down" kind="slash" /></OrderButton>
              </TradeRow>
            </TradeGroup>
            <Sep />
            <TradeGroup $left={3} $width={59}>
              <TradeLabel>Stop</TradeLabel>
              <TradeRow>
                <OrderButton><OrderIcon first="up" kind="list" /></OrderButton>
                <OrderButton><OrderIcon first="up" kind="slash" /></OrderButton>
              </TradeRow>
            </TradeGroup>
            <Sep />
            <TradeGroup $left={4} $width={57}>
              <TradeLabel>Vendre</TradeLabel>
              <PriceButton $color="red">
                <PriceSmall>1,11</PriceSmall>
                <PriceBig>69</PriceBig>
                <PriceSup>0</PriceSup>
              </PriceButton>
            </TradeGroup>
            <TradeGroup $left={3} $width={57}>
              <TradeLabel>Acheter</TradeLabel>
              <PriceButton $color="green">
                <PriceSmall>1,11</PriceSmall>
                <PriceBig>69</PriceBig>
                <PriceSup>6</PriceSup>
              </PriceButton>
            </TradeGroup>
            <Sep />
            <ChecksColumn>
              <CheckRow>
                <Check>✓</Check>
                <span>S</span>
                <svg width="24" height="16" viewBox="0 0 24 16">
                  <rect x="0.500" y="0.500" width="9" height="15" fill="#f4f4f4" stroke="#aaa" />
                  <path d="M3 2h3v3h2L4.500 8 1 5h2z" fill="#e02828" />
                  <path d="M4.500 8L8 11H6v4H3v-4H1z" fill="#14a02a" />
                  <path d="M12 6V2c0-1.500 2-1.500 2 0v4l4 1c2 1 2 3 1 5l-1 3h-5l-3-5c-1-2 1-2 2-1z" fill="#fff" stroke="#222" />
                </svg>
              </CheckRow>
              <CheckRow>
                <Check>✓</Check>
                <span>L</span>
                <PipField>8</PipField>
                <span>pips</span>
              </CheckRow>
            </ChecksColumn>
          </TradePanel>
        </ToolBar>

        <PaneRow $height={522} $gap={3}>
          <Pane $bg="#c9d8ad">
            <PricePlot />
            <Legend>
              <span>Prix</span>
              <Wrench size={14} color="#111" strokeWidth={1.6} />
              <WinBox />
              <CloseDot>×</CloseDot>
              <LegendDoc dir="down" />
              <LegendDoc dir="up" />
            </Legend>
            <LegendText>Jour :+Haut 1,11972 +Bas 1,11649</LegendText>
            <FillTag $left={543} $tone="sell">1@1,11715</FillTag>
            <FillTag $left={716} $tone="sell">1@1,11730</FillTag>
            <FillTag $left={561} $tone="buy">1@1,11705</FillTag>
            <FillTag $left={890} $tone="buy">1@1,11714</FillTag>
            <Footnote>© IT-Finance.com <em>Données indicatives</em></Footnote>
          </Pane>
          <Axis>
            <AxisTick $top={64} />
            <AxisLabel $top={64}>1,118</AxisLabel>
            <AxisTick $top={202} />
            <AxisLabel $top={202}>1,1175</AxisLabel>
            <AxisTick $top={171} $color="#f030f0" />
            <AxisTag $top={163} $width={43} $color="#f030f0">1,11761</AxisTag>
            <AxisTick $top={281} $color="#a09800" />
            <AxisTag $top={274} $width={43} $color="#a09800">1,11721</AxisTag>
            <AxisTick $top={312} $color="#f01818" />
            <AxisTag $top={304} $width={43} $color="#f01818">1,11710</AxisTag>
            <AxisTick $top={341} $color="#1c9cf0" />
            <AxisTag $top={334} $width={43} $color="#1c9cf0">1,11700</AxisTag>
            <AxisTick $top={359} $color="#111" />
            <AxisTag $top={351} $width={43} $color="#111" $bg="#ffc400">1,11693</AxisTag>
            <AxisTick $top={370} $color="#1c9cf0" />
            <AxisTag $top={365} $width={43} $color="#1c9cf0"><CountValue>1689</CountValue></AxisTag>
            <CountdownPart>3s</CountdownPart>
          </Axis>
        </PaneRow>

        <PaneRow $height={148} $gap={3}>
          <Pane $bg="linear-gradient(#eaf0ff, #e6edff)">
            <StochPlot />
            <IndicatorLegend text="Stochastique (14 3 3)" />
          </Pane>
          <Axis>
            <AxisTick $top={8} />
            <AxisLabel $top={8} $bold>100</AxisLabel>
            <AxisTick $top={76} $color="#111" />
            <AxisTick $top={90} $color="#2020c0" />
            <AxisTick $top={92} $color="#b050f0" />
            <AxisTag $top={92} $width={37} $color="#2020c0">33,807</AxisTag>
            <AxisTag $top={69} $width={37} $color="#111">49,032</AxisTag>
            <AxisTag $top={83} $width={37} $color="#b050f0">37,322</AxisTag>
          </Axis>
        </PaneRow>

        <PaneRow $height={126} $gap={3}>
          <Pane $bg="linear-gradient(#e5ecff, #e2e9ff)">
            <MomentumPlot />
            <IndicatorLegend text="Momentum (12)" />
          </Pane>
          <Axis>
            <AxisTick $top={15} />
            <AxisLabel $top={15}>0,0005</AxisLabel>
            <AxisTick $top={55} $color="#111" />
            <AxisTick $top={69} $color="#2020c0" />
            <AxisTick $top={77} $color="#8a8cf8" />
            <AxisTag $top={62} $width={50} $color="#2020c0">-0,00013</AxisTag>
            <AxisTag $top={46} $width={43} $color="#111">0,00005</AxisTag>
            <AxisTag $top={73} $width={50} $color="#8a5cf8">-0,00022</AxisTag>
            <AxisTick $top={101} />
            <AxisLabel $top={101}>-0,0005</AxisLabel>
          </Axis>
        </PaneRow>

        <PaneRow $height={124}>
          <Pane $bg="linear-gradient(#e0e7ff, #d9e4ff)">
            <RsiPlot />
            <IndicatorLegend text="Dynamic Zone RSI (14 20)" />
          </Pane>
          <Axis>
            <AxisTick $top={7} />
            <AxisLabel $top={7} $bold>100</AxisLabel>
            <AxisTick $top={61} $color="#3a78f4" />
            <AxisTick $top={68} $color="#0a7a1a" />
            <AxisTick $top={80} $color="#f01818" />
            <AxisTag $top={53} $width={37} $color="#3a78f4">45,123</AxisTag>
            <AxisTag $top={61} $width={37} $color="#0a7a1a">44,673</AxisTag>
            <AxisTag $top={75} $width={37} $color="#f01818">34,408</AxisTag>
          </Axis>
        </PaneRow>

        <TimeAxis>
          {times.map((t) => (
            <TimeTick key={t.label} $bold={t.bold}>{t.label}</TimeTick>
          ))}
        </TimeAxis>

        <BottomBar>
          <ShareButton>
            <svg width="16" height="16" viewBox="0 0 16 16">
              <path d="M4 8l8-5M4 8l8 5" stroke="#fff" strokeWidth="1.500" />
              <circle cx="3.500" cy="8" r="3" fill="#fff" />
              <circle cx="12.500" cy="3" r="2.500" fill="#fff" />
              <circle cx="12.500" cy="13" r="2.500" fill="#fff" />
            </svg>
            <span>Partager</span>
          </ShareButton>
          <BarIcon $width={16} $left={10}>
            <svg width="16" height="20" viewBox="0 0 16 20">
              <rect x="2.500" y="1" width="7" height="8" rx="3.500" fill="none" stroke="#111" strokeWidth="1.600" />
              <rect x="2.500" y="11" width="7" height="8" rx="3.500" fill="none" stroke="#111" strokeWidth="1.600" />
              <path d="M6 5v10" stroke="#111" strokeWidth="1.600" />
              <path d="M10 14h6l-3 3z" fill="#111" />
            </svg>
          </BarIcon>
          <BarIcon $width={14} $left={11}>
            <svg width="14" height="18" viewBox="0 0 14 18">
              <rect x="1" y="1" width="12" height="16" fill="#fff" stroke="#111" strokeWidth="1.500" />
              <path d="M3 4l8 3M3 8l8 3M3 12l8-3" stroke="#111" />
              <path d="M9 1h4v4z" fill="#e04040" />
              <path d="M1 17v-4l4 4z" fill="#18a028" />
            </svg>
          </BarIcon>
          <BarIcon $width={16} $left={13}>
            <svg width="16" height="18" viewBox="0 0 16 18">
              <path d="M0 1h9v4H0zM3 13h9v4H3zM0 7h8v4H0z" fill="#3cb040" />
              <path d="M10 3h6v4h-6zM9 8h7v4H9z" fill="#e46060" />
            </svg>
          </BarIcon>
          <ScrollTrack>
            <ScrollButton>◀</ScrollButton>
            <ScrollEnd>
              <ScrollButton>☰</ScrollButton>
              <ScrollButton>▶</ScrollButton>
            </ScrollEnd>
          </ScrollTrack>
          <BarIcon $width={16} $left={7}>
            <svg width="16" height="22" viewBox="0 0 16 22">
              <rect x="9" y="3" width="6" height="15" fill="#3cc040" stroke="#148020" />
              <rect x="1" y="13" width="6" height="7" fill="#e46060" stroke="#a02020" />
              <path d="M2 18l7-7c-1-3 2-5 4-4l-2 2 1 2 2-1c1 2-1 5-4 4l-6 6z" fill="#fff" stroke="#222" strokeWidth="0.800" />
            </svg>
          </BarIcon>
          <BarIcon $width={20} $left={11}>
            <svg width="22" height="20" viewBox="0 0 22 20">
              <circle cx="8" cy="8" r="6" fill="#d8d8d8" stroke="#111" strokeWidth="1.200" />
              <path d="M12.500 12.500l5 5" stroke="#111" strokeWidth="3" />
              <path d="M18 1v8M16 3l2-2 2 2M16 7l2 2 2-2M1 18h8M3 16l-2 2 2 2M7 16l2 2-2 2" stroke="#1010e0" fill="none" />
            </svg>
          </BarIcon>
          <BarIcon $width={20} $left={8}>
            <Magnifier mark="minus" />
          </BarIcon>
          <BarIcon $width={20} $left={7}>
            <Magnifier mark="plus" />
          </BarIcon>
        </BottomBar>
      </Frame>
    </Root>
  );
};

export default App;
